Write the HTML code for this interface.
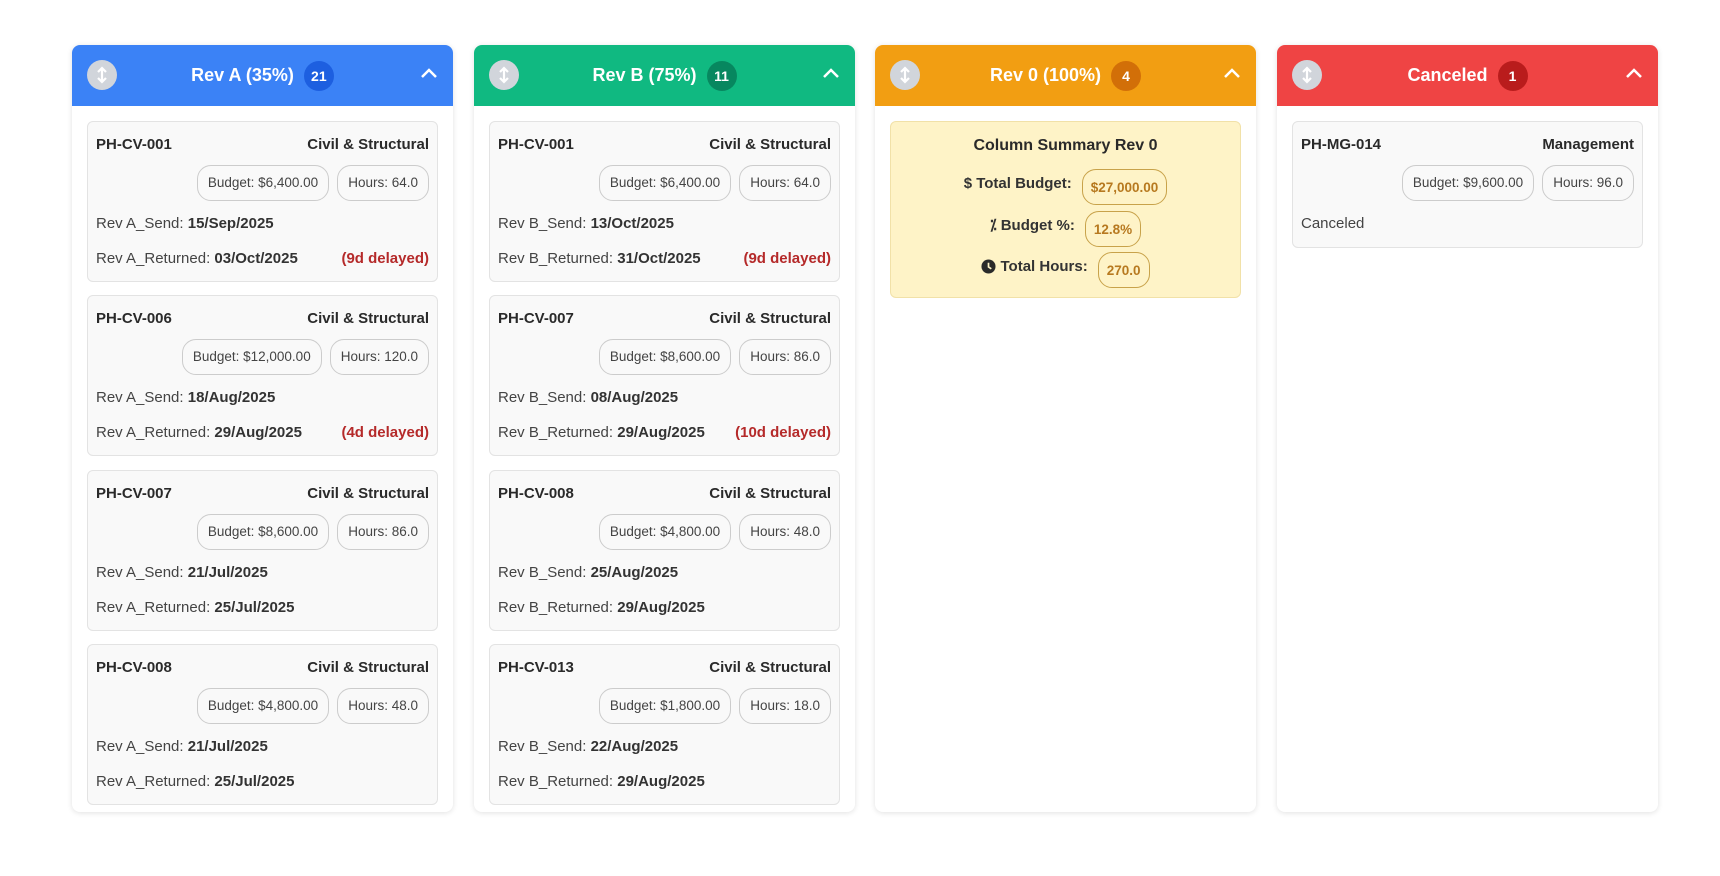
<!DOCTYPE html>
<html><head><meta charset="utf-8"><style>
*{box-sizing:border-box;margin:0;padding:0}
body{width:1720px;height:876px;background:#fff;font-family:"Liberation Sans",Arial,sans-serif;color:#333;position:relative;overflow:hidden}
.col{position:absolute;top:45px;width:381px;height:767px;background:#fff;border-radius:8px;box-shadow:0 1px 6px rgba(0,0,0,0.12);overflow:hidden}
.hd{height:61px;position:relative;color:#fff;font-weight:bold;font-size:18px;display:flex;align-items:center;justify-content:center}
.ic{position:absolute;left:15px;top:15px;width:30px;height:30px;border-radius:50%;background:#d1d5db;display:flex;align-items:center;justify-content:center}
.bd{display:inline-flex;width:30px;height:30px;border-radius:50%;align-items:center;justify-content:center;font-size:14px;margin-left:10px}
.chev{position:absolute;right:15px;top:22px}
.card{position:absolute;left:15px;width:351px;height:161px;background:#f9f9f9;border:1px solid #e3e3e3;border-radius:6px}
.r{position:absolute;left:8px;right:8px;font-size:15px;display:flex;justify-content:space-between;line-height:18px}
.t{top:14px;font-weight:bold;color:#2a2a2a}
.p{top:43px;justify-content:flex-end;gap:8px}
.pill{height:36px;border:1px solid #ccc;border-radius:14px;padding:0 10px;font-size:13.5px;display:flex;align-items:center;color:#444}
.s{top:93px;color:#444}
.rt{top:128px;color:#444}
b{color:#333}
.dl{color:#b52a2a;font-weight:bold}
</style></head><body>

<div class="col" style="left:72px">
 <div class="hd" style="background:#3b82f6">
  <div class="ic"><svg width="14" height="18" viewBox="0 0 14 18"><path d="M7 2v14M3 6l4-4 4 4M3 12l4 4 4-4" stroke="#fff" stroke-width="2.2" fill="none"/></svg></div>
  Rev A (35%)<span class="bd" style="background:#1d5fe0">21</span>
  <svg class="chev" width="18" height="12" viewBox="0 0 18 12"><path d="M2 10l7-7 7 7" stroke="#fff" stroke-width="2.5" fill="none"/></svg>
 </div>
 <div class="card" style="top:76px"><div class="r t"><span>PH-CV-001</span><span>Civil &amp; Structural</span></div><div class="r p"><span class="pill">Budget: $6,400.00</span><span class="pill">Hours: 64.0</span></div><div class="r s"><span>Rev A_Send: <b>15/Sep/2025</b></span></div><div class="r rt"><span>Rev A_Returned: <b>03/Oct/2025</b></span><span class="dl">(9d delayed)</span></div></div>
 <div class="card" style="top:250px"><div class="r t"><span>PH-CV-006</span><span>Civil &amp; Structural</span></div><div class="r p"><span class="pill">Budget: $12,000.00</span><span class="pill">Hours: 120.0</span></div><div class="r s"><span>Rev A_Send: <b>18/Aug/2025</b></span></div><div class="r rt"><span>Rev A_Returned: <b>29/Aug/2025</b></span><span class="dl">(4d delayed)</span></div></div>
 <div class="card" style="top:425px"><div class="r t"><span>PH-CV-007</span><span>Civil &amp; Structural</span></div><div class="r p"><span class="pill">Budget: $8,600.00</span><span class="pill">Hours: 86.0</span></div><div class="r s"><span>Rev A_Send: <b>21/Jul/2025</b></span></div><div class="r rt"><span>Rev A_Returned: <b>25/Jul/2025</b></span></div></div>
 <div class="card" style="top:599px"><div class="r t"><span>PH-CV-008</span><span>Civil &amp; Structural</span></div><div class="r p"><span class="pill">Budget: $4,800.00</span><span class="pill">Hours: 48.0</span></div><div class="r s"><span>Rev A_Send: <b>21/Jul/2025</b></span></div><div class="r rt"><span>Rev A_Returned: <b>25/Jul/2025</b></span></div></div>
</div>

<div class="col" style="left:474px">
 <div class="hd" style="background:#10b981">
  <div class="ic"><svg width="14" height="18" viewBox="0 0 14 18"><path d="M7 2v14M3 6l4-4 4 4M3 12l4 4 4-4" stroke="#fff" stroke-width="2.2" fill="none"/></svg></div>
  Rev B (75%)<span class="bd" style="background:#07875f">11</span>
  <svg class="chev" width="18" height="12" viewBox="0 0 18 12"><path d="M2 10l7-7 7 7" stroke="#fff" stroke-width="2.5" fill="none"/></svg>
 </div>
 <div class="card" style="top:76px"><div class="r t"><span>PH-CV-001</span><span>Civil &amp; Structural</span></div><div class="r p"><span class="pill">Budget: $6,400.00</span><span class="pill">Hours: 64.0</span></div><div class="r s"><span>Rev B_Send: <b>13/Oct/2025</b></span></div><div class="r rt"><span>Rev B_Returned: <b>31/Oct/2025</b></span><span class="dl">(9d delayed)</span></div></div>
 <div class="card" style="top:250px"><div class="r t"><span>PH-CV-007</span><span>Civil &amp; Structural</span></div><div class="r p"><span class="pill">Budget: $8,600.00</span><span class="pill">Hours: 86.0</span></div><div class="r s"><span>Rev B_Send: <b>08/Aug/2025</b></span></div><div class="r rt"><span>Rev B_Returned: <b>29/Aug/2025</b></span><span class="dl">(10d delayed)</span></div></div>
 <div class="card" style="top:425px"><div class="r t"><span>PH-CV-008</span><span>Civil &amp; Structural</span></div><div class="r p"><span class="pill">Budget: $4,800.00</span><span class="pill">Hours: 48.0</span></div><div class="r s"><span>Rev B_Send: <b>25/Aug/2025</b></span></div><div class="r rt"><span>Rev B_Returned: <b>29/Aug/2025</b></span></div></div>
 <div class="card" style="top:599px"><div class="r t"><span>PH-CV-013</span><span>Civil &amp; Structural</span></div><div class="r p"><span class="pill">Budget: $1,800.00</span><span class="pill">Hours: 18.0</span></div><div class="r s"><span>Rev B_Send: <b>22/Aug/2025</b></span></div><div class="r rt"><span>Rev B_Returned: <b>29/Aug/2025</b></span></div></div>
</div>

<div class="col" style="left:875px">
 <div class="hd" style="background:#f29e12">
  <div class="ic"><svg width="14" height="18" viewBox="0 0 14 18"><path d="M7 2v14M3 6l4-4 4 4M3 12l4 4 4-4" stroke="#fff" stroke-width="2.2" fill="none"/></svg></div>
  Rev 0 (100%)<span class="bd" style="background:#d26f08">4</span>
  <svg class="chev" width="18" height="12" viewBox="0 0 18 12"><path d="M2 10l7-7 7 7" stroke="#fff" stroke-width="2.5" fill="none"/></svg>
 </div>
 <div style="position:absolute;left:15px;top:76px;width:351px;height:177px;background:#fef3c7;border:1px solid #f1e1a8;border-radius:6px;text-align:center;font-weight:bold">
  <div style="position:absolute;top:15px;left:0;right:0;font-size:16px;color:#2a2a2a">Column Summary Rev 0</div>
  <div style="position:absolute;top:47px;left:0;right:0;display:flex;justify-content:center;align-items:center;gap:10px;font-size:15px"><span style="margin-top:-8px">$ Total Budget:</span><span style="border:1px solid #c8a24a;border-radius:14px;height:36px;padding:0 8px;display:flex;align-items:center;color:#b7791f;font-size:13.5px">$27,000.00</span></div>
  <div style="position:absolute;top:89px;left:0;right:0;display:flex;justify-content:center;align-items:center;gap:10px;font-size:15px"><span style="margin-top:-8px">⁒ Budget %:</span><span style="border:1px solid #c8a24a;border-radius:14px;height:36px;padding:0 8px;display:flex;align-items:center;color:#b7791f;font-size:13.5px">12.8%</span></div>
  <div style="position:absolute;top:130px;left:0;right:0;display:flex;justify-content:center;align-items:center;gap:10px;font-size:15px"><span style="margin-top:-8px;display:flex;align-items:center;gap:4px"><svg width="15" height="15" viewBox="0 0 16 16"><circle cx="8" cy="8" r="7.5" fill="#2a2a2a"/><path d="M8 4v4.5l3 2" stroke="#fef3c7" stroke-width="1.8" fill="none"/></svg>Total Hours:</span><span style="border:1px solid #c8a24a;border-radius:14px;height:36px;padding:0 8px;display:flex;align-items:center;color:#b7791f;font-size:13.5px">270.0</span></div>
 </div>
</div>

<div class="col" style="left:1277px">
 <div class="hd" style="background:#ef4444">
  <div class="ic"><svg width="14" height="18" viewBox="0 0 14 18"><path d="M7 2v14M3 6l4-4 4 4M3 12l4 4 4-4" stroke="#fff" stroke-width="2.2" fill="none"/></svg></div>
  Canceled<span class="bd" style="background:#b91c1c">1</span>
  <svg class="chev" width="18" height="12" viewBox="0 0 18 12"><path d="M2 10l7-7 7 7" stroke="#fff" stroke-width="2.5" fill="none"/></svg>
 </div>
 <div class="card" style="top:76px;height:127px"><div class="r t"><span>PH-MG-014</span><span>Management</span></div><div class="r p"><span class="pill">Budget: $9,600.00</span><span class="pill">Hours: 96.0</span></div><div class="r s"><span>Canceled</span></div></div>
</div>

</body></html>
